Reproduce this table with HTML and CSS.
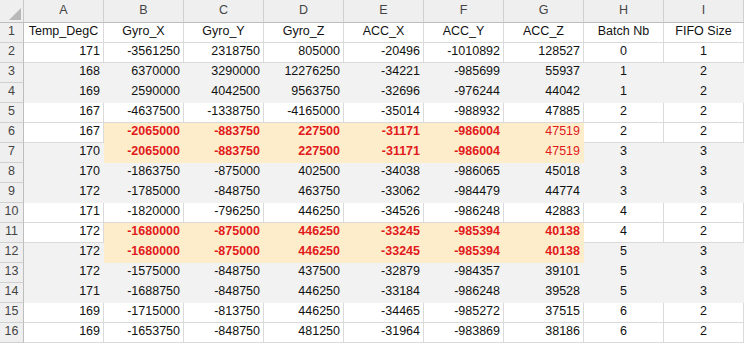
FILE: index.html
```html
<!DOCTYPE html>
<html>
<head>
<meta charset="utf-8">
<link rel="stylesheet" href="styles.css">
</head>
<body>
<div class="sheet">
  <div class="row head">
    <div class="corner"><svg width="23" height="22" viewBox="0 0 23 22"><polygon points="9,20 21,8 21,20" fill="#b8b8b8"/></svg></div>
    <div class="ch">A</div><div class="ch">B</div><div class="ch">C</div><div class="ch">D</div><div class="ch">E</div><div class="ch">F</div><div class="ch">G</div><div class="ch">H</div><div class="ch">I</div>
  </div>
  <div class="row">
    <div class="rh">1</div>
    <div class="c ctr">Temp_DegC</div><div class="c ctr">Gyro_X</div><div class="c ctr">Gyro_Y</div><div class="c ctr">Gyro_Z</div><div class="c ctr">ACC_X</div><div class="c ctr">ACC_Y</div><div class="c ctr">ACC_Z</div><div class="c ctr">Batch Nb</div><div class="c ctr">FIFO Size</div>
  </div>
  <div class="row">
    <div class="rh">2</div>
    <div class="c">171</div><div class="c">-3561250</div><div class="c">2318750</div><div class="c">805000</div><div class="c">-20496</div><div class="c">-1010892</div><div class="c">128527</div><div class="c ctr">0</div><div class="c ctr">1</div>
  </div>
  <div class="row gray">
    <div class="rh">3</div>
    <div class="c">168</div><div class="c">6370000</div><div class="c">3290000</div><div class="c">12276250</div><div class="c">-34221</div><div class="c">-985699</div><div class="c">55937</div><div class="c ctr">1</div><div class="c ctr">2</div>
  </div>
  <div class="row gray">
    <div class="rh">4</div>
    <div class="c">169</div><div class="c">2590000</div><div class="c">4042500</div><div class="c">9563750</div><div class="c">-32696</div><div class="c">-976244</div><div class="c">44042</div><div class="c ctr">1</div><div class="c ctr">2</div>
  </div>
  <div class="row">
    <div class="rh">5</div>
    <div class="c">167</div><div class="c">-4637500</div><div class="c">-1338750</div><div class="c">-4165000</div><div class="c">-35014</div><div class="c">-988932</div><div class="c">47885</div><div class="c ctr">2</div><div class="c ctr">2</div>
  </div>
  <div class="row">
    <div class="rh">6</div>
    <div class="c">167</div><div class="c hl b">-2065000</div><div class="c hl b">-883750</div><div class="c hl b">227500</div><div class="c hl b">-31171</div><div class="c hl b">-986004</div><div class="c hl">47519</div><div class="c ctr">2</div><div class="c ctr">2</div>
  </div>
  <div class="row gray">
    <div class="rh">7</div>
    <div class="c">170</div><div class="c hl b">-2065000</div><div class="c hl b">-883750</div><div class="c hl b">227500</div><div class="c hl b">-31171</div><div class="c hl b">-986004</div><div class="c hl">47519</div><div class="c ctr">3</div><div class="c ctr">3</div>
  </div>
  <div class="row gray">
    <div class="rh">8</div>
    <div class="c">170</div><div class="c">-1863750</div><div class="c">-875000</div><div class="c">402500</div><div class="c">-34038</div><div class="c">-986065</div><div class="c">45018</div><div class="c ctr">3</div><div class="c ctr">3</div>
  </div>
  <div class="row gray">
    <div class="rh">9</div>
    <div class="c">172</div><div class="c">-1785000</div><div class="c">-848750</div><div class="c">463750</div><div class="c">-33062</div><div class="c">-984479</div><div class="c">44774</div><div class="c ctr">3</div><div class="c ctr">3</div>
  </div>
  <div class="row">
    <div class="rh">10</div>
    <div class="c">171</div><div class="c">-1820000</div><div class="c">-796250</div><div class="c">446250</div><div class="c">-34526</div><div class="c">-986248</div><div class="c">42883</div><div class="c ctr">4</div><div class="c ctr">2</div>
  </div>
  <div class="row">
    <div class="rh">11</div>
    <div class="c">172</div><div class="c hl b">-1680000</div><div class="c hl b">-875000</div><div class="c hl b">446250</div><div class="c hl b">-33245</div><div class="c hl b">-985394</div><div class="c hl b">40138</div><div class="c ctr">4</div><div class="c ctr">2</div>
  </div>
  <div class="row gray">
    <div class="rh">12</div>
    <div class="c">172</div><div class="c hl b">-1680000</div><div class="c hl b">-875000</div><div class="c hl b">446250</div><div class="c hl b">-33245</div><div class="c hl b">-985394</div><div class="c hl b">40138</div><div class="c ctr">5</div><div class="c ctr">3</div>
  </div>
  <div class="row gray">
    <div class="rh">13</div>
    <div class="c">172</div><div class="c">-1575000</div><div class="c">-848750</div><div class="c">437500</div><div class="c">-32879</div><div class="c">-984357</div><div class="c">39101</div><div class="c ctr">5</div><div class="c ctr">3</div>
  </div>
  <div class="row gray">
    <div class="rh">14</div>
    <div class="c">171</div><div class="c">-1688750</div><div class="c">-848750</div><div class="c">446250</div><div class="c">-33184</div><div class="c">-986248</div><div class="c">39528</div><div class="c ctr">5</div><div class="c ctr">3</div>
  </div>
  <div class="row">
    <div class="rh">15</div>
    <div class="c">169</div><div class="c">-1715000</div><div class="c">-813750</div><div class="c">446250</div><div class="c">-34465</div><div class="c">-985272</div><div class="c">37515</div><div class="c ctr">6</div><div class="c ctr">2</div>
  </div>
  <div class="row">
    <div class="rh">16</div>
    <div class="c">169</div><div class="c">-1653750</div><div class="c">-848750</div><div class="c">481250</div><div class="c">-31964</div><div class="c">-983869</div><div class="c">38186</div><div class="c ctr">6</div><div class="c ctr">2</div>
  </div>
</div>
</body>
</html>
```
FILE: styles.css
```css
html, body {
  margin: 0;
  padding: 0;
  background: #ffffff;
}
body {
  font-family: "Liberation Sans", Arial, sans-serif;
  font-size: 12.5px;
  color: #111111;
  overflow: hidden;
}
.sheet {
  display: flex;
  flex-direction: column;
  width: 744px;
}
.row {
  display: flex;
  height: 20px;
}
.row.head {
  height: 23px;
}
.corner {
  width: 24px;
  height: 23px;
  box-sizing: border-box;
  background: #efefef;
  border-right: 1px solid #c8c8c8;
  border-bottom: 1px solid #bdbdbd;
}
.corner svg {
  display: block;
}
.ch {
  width: 80px;
  height: 23px;
  box-sizing: border-box;
  background: #efefef;
  border-right: 1px solid #d0d0d0;
  border-bottom: 1px solid #bdbdbd;
  text-align: center;
  line-height: 20px;
  color: #444444;
}
.rh {
  width: 24px;
  height: 20px;
  box-sizing: border-box;
  background: #efefef;
  border-right: 1px solid #bdbdbd;
  border-bottom: 1px solid #d0d0d0;
  text-align: center;
  line-height: 17px;
  color: #444444;
}
.c {
  width: 80px;
  height: 20px;
  box-sizing: border-box;
  padding: 0 3px;
  border-right: 1px solid #dadada;
  border-bottom: 1px solid #dadada;
  background: #ffffff;
  text-align: right;
  line-height: 16px;
  white-space: nowrap;
  overflow: hidden;
}
.c.ctr {
  text-align: center;
}
.gray .c {
  background: #f2f2f2;
  border-color: #f2f2f2;
}
.c.hl {
  background: #feedcb;
  border-color: #feedcb;
  color: #e2191b;
}
.c.b {
  font-weight: bold;
}
```
